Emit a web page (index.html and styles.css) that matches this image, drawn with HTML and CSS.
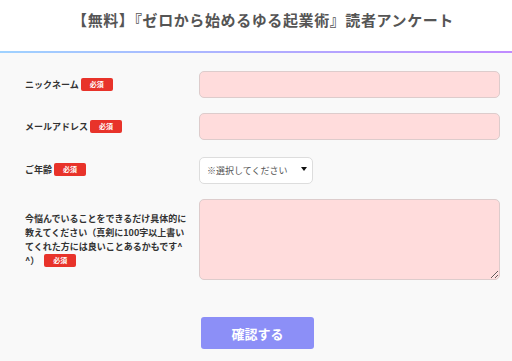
FILE: index.html
```html
<!DOCTYPE html>
<html lang="ja">
<head>
  <meta charset="UTF-8" />
  <meta name="viewport" content="width=device-width, initial-scale=1.0" />
  <title>読者アンケート</title>
  <link rel="stylesheet" href="styles.css">
</head>
<body>
  <header class="page-header">
    <h1>【無料】『ゼロから始めるゆる起業術』読者アンケート</h1>
  </header>
  <div class="header-line"></div>

  <form class="survey-form">
    <div class="form-row">
      <label for="nickname">ニックネーム<span class="required">必須</span></label>
      <input id="nickname" type="text" class="field" />
    </div>
    <div class="form-row">
      <label for="email">メールアドレス<span class="required">必須</span></label>
      <input id="email" type="email" class="field" />
    </div>
    <div class="form-row">
      <label for="age">ご年齢<span class="required">必須</span></label>
      <div class="select-wrap">
        <select id="age" class="select-field">
          <option>※選択してください</option>
        </select>
        <span class="select-arrow"></span>
      </div>
    </div>
    <div class="form-row">
      <label for="worry" class="long-label">今悩んでいることをできるだけ具体的に教えてください（真剣に100字以上書いてくれた方には良いことあるかもです^^）<span class="required">必須</span></label>
      <textarea id="worry" class="field textarea-field"></textarea>
    </div>
    <div class="button-bar">
      <button type="button" class="submit-button">確認する</button>
    </div>
  </form>
</body>
</html>
```

FILE: styles.css
```css
* { box-sizing: border-box; }
body {
  margin: 0;
  font-family: "Noto Sans CJK JP", "Noto Sans", sans-serif;
  background: #f9f9f9;
  color: #333;
}
.page-header {
  background: #ffffff;
  height: 51px;
  display: flex;
  align-items: center;
  justify-content: center;
  padding-left: 14px;
}
.page-header h1 {
  margin: 0 0 12px;
  font-size: 15px;
  font-weight: bold;
  color: #555;
  letter-spacing: 0.6px;
}
.header-line {
  height: 2px;
  background: linear-gradient(90deg, #9fd2ff, #c08bff);
}
.survey-form {
  padding: 18px 12px 0 25px;
  display: flex;
  flex-direction: column;
  gap: 15px;
}
.form-row {
  display: grid;
  grid-template-columns: 174px 1fr;
  align-items: center;
}
.form-row label {
  font-size: 9px;
  font-weight: bold;
  color: #333;
  line-height: 14px;
}
.long-label {
  width: 166px;
  word-break: break-all;
}
.required {
  display: inline-block;
  margin-left: 2px;
  background: #e8332a;
  color: #fff;
  font-size: 7px;
  font-weight: bold;
  line-height: 13px;
  width: 32px;
  text-align: center;
  border-radius: 2px;
  vertical-align: 1px;
}
.long-label .required {
  margin-left: 5px;
}
.field {
  width: 100%;
  height: 27px;
  background: #ffdcdc;
  border: 1px solid #ddcccc;
  border-radius: 5px;
  outline: none;
  font-family: inherit;
}
.textarea-field {
  height: 81px;
  resize: vertical;
}
.select-wrap {
  position: relative;
  width: 114px;
}
.select-field {
  appearance: none;
  width: 100%;
  height: 27px;
  background: #fff;
  border: 1px solid #ddd;
  border-radius: 5px;
  padding: 0 0 0 7px;
  font-family: inherit;
  font-size: 9px;
  color: #555;
  outline: none;
}
.select-arrow {
  position: absolute;
  right: 6px;
  top: 12px;
  width: 0;
  height: 0;
  border-left: 3px solid transparent;
  border-right: 3px solid transparent;
  border-top: 4px solid #111;
}
.button-bar {
  margin-top: 22px;
  display: flex;
  justify-content: center;
  margin-left: -10px;
}
.submit-button {
  width: 113px;
  height: 32px;
  border: none;
  border-radius: 3px;
  background: #8c8ff7;
  color: #fff;
  font-family: inherit;
  font-size: 13px;
  font-weight: bold;
  cursor: pointer;
}
```
